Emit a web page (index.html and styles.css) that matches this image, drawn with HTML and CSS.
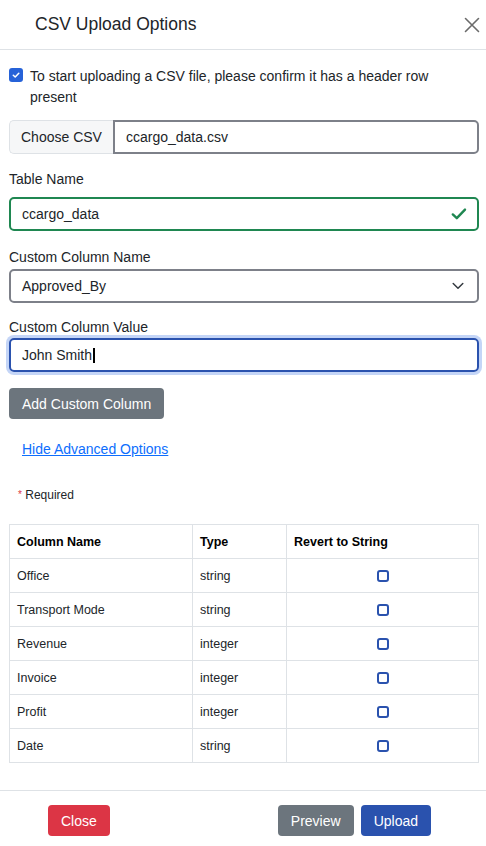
FILE: index.html
```html
<!DOCTYPE HTML>
<html>
<head>
  <meta name="viewport" content="width=device-width">
  <title>CSV Upload Options</title>
  <link rel="stylesheet" href="styles.css">
</head>
<body>
<div class="modal">
  <header class="modal-header">
    <h1 class="modal-title">CSV Upload Options</h1>
    <button class="btn-close" aria-label="Close">
      <svg width="16" height="16" viewBox="0 0 16 16"><path d="M1.5 1.5 L14.5 14.5 M14.5 1.5 L1.5 14.5" stroke="#6b6b6b" stroke-width="1.6" fill="none" stroke-linecap="round"/></svg>
    </button>
  </header>

  <div class="modal-body">
    <div class="check-row">
      <span class="check checked">
        <svg width="10" height="10" viewBox="0 0 10 10"><path d="M2.3 5.2 L4.2 7 L7.8 3.2" stroke="#fff" stroke-width="1.5" fill="none" stroke-linecap="round" stroke-linejoin="round"/></svg>
      </span>
      <label>To start uploading a CSV file, please confirm it has a header row present</label>
    </div>

    <div class="file-group">
      <span class="file-btn">Choose CSV</span>
      <span class="file-name">ccargo_data.csv</span>
    </div>

    <label class="form-label label-table">Table Name</label>
    <div class="form-control valid">
      <span>ccargo_data</span>
      <svg width="16" height="14" viewBox="0 0 16 14"><path d="M1.8 7.4 L5.8 11.2 L14 2.6" stroke="#1f8751" stroke-width="2.4" fill="none" stroke-linecap="round" stroke-linejoin="round"/></svg>
    </div>

    <label class="form-label label-name">Custom Column Name</label>
    <div class="form-control select">
      <span>Approved_By</span>
      <svg width="12" height="8" viewBox="0 0 12 8"><path d="M1.2 1.5 L6 6.2 L10.8 1.5" stroke="#343a40" stroke-width="1.5" fill="none" stroke-linecap="round" stroke-linejoin="round"/></svg>
    </div>

    <label class="form-label label-value">Custom Column Value</label>
    <div class="form-control focused">
      <span>John Smith</span><span class="caret"></span>
    </div>

    <button class="btn btn-secondary btn-add">Add Custom Column</button>

    <a href="#" class="adv-link">Hide Advanced Options</a>

    <p class="required"><span class="star">*</span> Required</p>

    <table class="columns">
      <thead>
        <tr>
          <th class="c-name">Column Name</th>
          <th class="c-type">Type</th>
          <th>Revert to String</th>
        </tr>
      </thead>
      <tbody>
        <tr><td>Office</td><td>string</td><td class="c-box"><span class="box"></span></td></tr>
        <tr><td>Transport Mode</td><td>string</td><td class="c-box"><span class="box"></span></td></tr>
        <tr><td>Revenue</td><td>integer</td><td class="c-box"><span class="box"></span></td></tr>
        <tr><td>Invoice</td><td>integer</td><td class="c-box"><span class="box"></span></td></tr>
        <tr><td>Profit</td><td>integer</td><td class="c-box"><span class="box"></span></td></tr>
        <tr><td>Date</td><td>string</td><td class="c-box"><span class="box"></span></td></tr>
      </tbody>
    </table>
  </div>

  <footer class="modal-footer">
    <button class="btn btn-danger">Close</button>
    <div class="right-btns">
      <button class="btn btn-secondary">Preview</button>
      <button class="btn btn-primary">Upload</button>
    </div>
  </footer>
</div>
</body>
</html>
```

FILE: styles.css
```css
body {
  font-family: "Liberation Sans", Arial, sans-serif;
  margin: 0;
  padding: 0;
  background-color: #fff;
  color: #212529;
  font-size: 14px;
}
.modal-header {
  height: 50px;
  display: flex;
  align-items: center;
  justify-content: space-between;
  padding: 1px 6px 1px 35px;
  box-sizing: border-box;
  border-bottom: 1px solid #dee2e6;
}
.modal-title {
  margin: 0;
  font-size: 17.5px;
  font-weight: normal;
  color: #212529;
}
.btn-close {
  border: none;
  background: none;
  padding: 0;
  width: 16px;
  height: 16px;
  display: flex;
}
.modal-body {
  padding: 16px 7px 27px 9px;
}
.check-row {
  display: flex;
  align-items: flex-start;
  line-height: 21px;
}
.check {
  width: 14px;
  height: 14px;
  border-radius: 3px;
  flex: none;
  margin-top: 2px;
  margin-right: 7px;
  display: flex;
  align-items: center;
  justify-content: center;
  box-sizing: border-box;
}
.check.checked {
  background-color: #2662d8;
}
.file-group {
  display: flex;
  height: 34px;
  margin-top: 12px;
}
.file-btn {
  display: flex;
  align-items: center;
  padding: 0 11px;
  background-color: #f6f7f8;
  border: 1px solid #dee2e6;
  border-right: none;
  border-radius: 5px 0 0 5px;
}
.file-name {
  flex: 1;
  display: flex;
  align-items: center;
  padding: 0 11px;
  border: 2px solid #7d8089;
  border-radius: 0 5px 5px 0;
}
.form-label {
  display: block;
  line-height: 18px;
}
.label-table {
  margin-top: 16px;
  margin-bottom: 9px;
}
.label-name {
  margin-top: 17px;
  margin-bottom: 3px;
}
.label-value {
  margin-top: 15px;
  margin-bottom: 2px;
}
.form-control {
  height: 34px;
  box-sizing: border-box;
  border: 2px solid #7d8089;
  border-radius: 5px;
  padding: 0 10px 0 11px;
  display: flex;
  align-items: center;
  justify-content: space-between;
}
.form-control.valid {
  border-color: #1f8751;
}
.form-control.select {
  padding-right: 13px;
}
.form-control.focused {
  border-color: #2a52ae;
  box-shadow: 0 0 0 3px #c4d5f7;
  justify-content: flex-start;
}
.caret {
  width: 1.5px;
  height: 15px;
  background-color: #000;
  margin-left: 1px;
}
.btn {
  font-family: "Liberation Sans", Arial, sans-serif;
  font-size: 14px;
  color: #fff;
  border: none;
  border-radius: 4px;
  height: 31px;
  padding: 0 13px;
}
.btn-secondary {
  background-color: #6c757d;
}
.btn-danger {
  background-color: #dc3545;
}
.btn-primary {
  background-color: #2a52ae;
}
.btn-add {
  display: block;
  margin-top: 16px;
}
.adv-link {
  display: block;
  width: max-content;
  margin: 20px 0 0 13px;
  line-height: 20px;
  color: #0d6efd;
  text-decoration: underline;
}
.required {
  margin: 28px 0 0 9px;
  font-size: 12px;
  line-height: 16px;
}
.star {
  color: #dc3545;
  font-size: 10px;
  vertical-align: top;
}
.columns {
  width: 100%;
  margin-top: 21px;
  border-collapse: collapse;
  font-size: 12.5px;
}
.columns th,
.columns td {
  border: 1px solid #dee2e6;
  height: 34px;
  box-sizing: border-box;
  padding: 0 7px;
  text-align: left;
}
.columns th {
  color: #000;
}
.c-name {
  width: 183px;
}
.c-type {
  width: 94px;
}
.columns td.c-box {
  text-align: center;
}
.box {
  display: inline-block;
  width: 12px;
  height: 12px;
  box-sizing: border-box;
  border: 2px solid #2a52ae;
  border-radius: 3px;
  vertical-align: middle;
}
.modal-footer {
  border-top: 1px solid #dee2e6;
  padding: 14px 55px 14px 48px;
  display: flex;
  justify-content: space-between;
}
.right-btns {
  display: flex;
  gap: 7px;
}
```
